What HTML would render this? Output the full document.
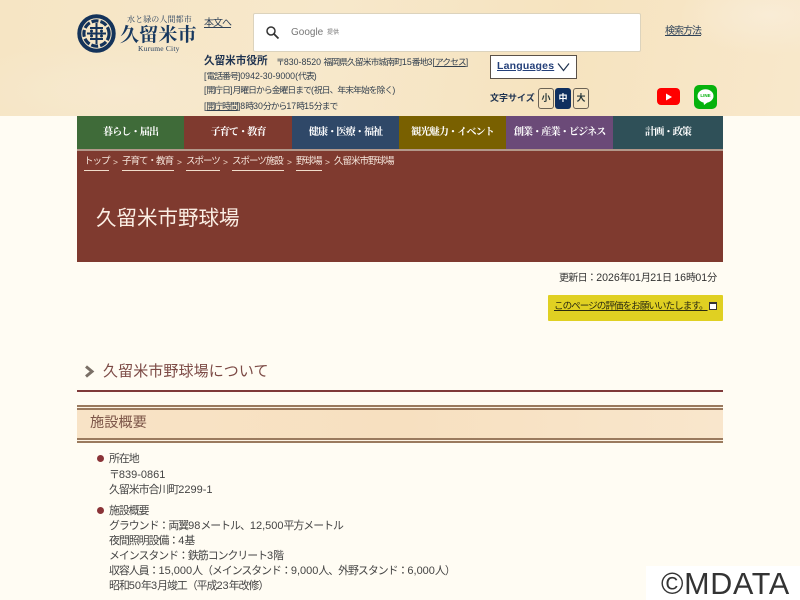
<!DOCTYPE html>
<html lang="ja">
<head>
<meta charset="utf-8">
<title>久留米市野球場</title>
<style>
*{box-sizing:border-box}
html,body{margin:0;padding:0;width:800px;height:600px;overflow:hidden;background:#fffcf3}
body{font-family:"Liberation Sans","Noto Sans CJK JP",sans-serif;color:#333;position:relative}
.a{position:absolute;white-space:nowrap}
i{font-style:normal}
a,.u{text-decoration:underline}
.hd{left:0;top:0;width:800px;height:116px;background:
radial-gradient(ellipse 160px 50px at 120px 90px,#f7e9cf 0,rgba(247,233,207,0) 100%),
radial-gradient(ellipse 90px 40px at 770px 15px,#f9ecd6 0,rgba(249,236,214,0) 100%),
linear-gradient(100deg,#f6e5c4 0%,#f7e8cb 40%,#f6e3bf 70%,#f8e8cb 100%)}
.t{color:#33404f;font-size:8.8px;line-height:12px}
.t i{font-size:8.8px;letter-spacing:-.95px}
.nav{top:116px;height:33px;color:#fff;font-size:10.2px;letter-spacing:-1px;font-weight:bold;font-family:"Liberation Serif","Noto Serif CJK SC","Noto Sans CJK JP",serif;text-align:center;line-height:33px}
.bc{color:#f5e6dc;font-size:9.5px;letter-spacing:-1px;top:152px;line-height:20px;height:19px;border-bottom:1px solid #f0dccb}
.sep{color:#f0dccb;font-size:8.5px;top:152px;line-height:20px}
.li{left:109px;font-size:11px;line-height:15px;color:#444}
.li i{font-size:10.9px;letter-spacing:-1px}
.up i{font-size:10px;letter-spacing:-.7px}
.dot{left:97px;width:7px;height:7px;border-radius:50%;background:#8a3337}
</style>
</head>
<body>
<div class="a hd"></div>

<!-- logo -->
<svg class="a" style="left:77px;top:14px" width="39" height="39" viewBox="0 0 39 39">
<circle cx="19.5" cy="19.5" r="17.2" fill="none" stroke="#14335a" stroke-width="4"/>
<circle cx="19.5" cy="19.5" r="12.6" fill="none" stroke="#14335a" stroke-width="3.2" stroke-dasharray="7 2"/>
<path d="M19.5 9V30M10 19.5H29M13 14H26M13 25H26" stroke="#14335a" stroke-width="2" fill="none"/>
<circle cx="14.5" cy="17" r="1.5" fill="#14335a"/><circle cx="24.5" cy="17" r="1.5" fill="#14335a"/>
<circle cx="14.5" cy="22" r="1.5" fill="#14335a"/><circle cx="24.5" cy="22" r="1.5" fill="#14335a"/>
</svg>
<div class="a" style="left:127px;top:14px;font-size:8px;line-height:12px;color:#1f3a5c;font-family:'Liberation Serif','Noto Serif CJK SC',serif;letter-spacing:.1px">水と緑の人間都市</div>
<div class="a" style="left:120px;top:24px;font-size:19px;line-height:23px;color:#17385f;font-family:'Liberation Serif','Noto Serif CJK SC',serif;font-weight:bold;letter-spacing:.2px">久留米市</div>
<div class="a" style="left:138px;top:44px;font-size:7.5px;line-height:10px;color:#1f3a5c;font-family:'Liberation Serif',serif;letter-spacing:.2px">Kurume City</div>

<div class="a u" style="left:204px;top:17px;font-size:10px;letter-spacing:-1px;line-height:14px;color:#2f4258">本文へ</div>

<!-- search -->
<div class="a" style="left:253px;top:13px;width:388px;height:39px;background:#fff;border:1px solid #dcd3bd;border-radius:2px"></div>
<svg class="a" style="left:265px;top:25px" width="15" height="15" viewBox="0 0 15 15"><circle cx="6" cy="6" r="4" fill="none" stroke="#333" stroke-width="1.5"/><path d="M9 9L13.5 13.5" stroke="#333" stroke-width="1.8"/></svg>
<div class="a" style="left:291px;top:26px;font-size:10px;line-height:13px;color:#777">Google</div>
<div class="a" style="left:327px;top:27px;font-size:6px;line-height:12px;color:#777">提供</div>
<div class="a u" style="left:665px;top:25px;font-size:10px;letter-spacing:-1px;line-height:13px;color:#2f4258">検索方法</div>

<!-- address -->
<div class="a" style="left:204px;top:54px;font-size:10.6px;line-height:15px;font-weight:bold;color:#1f3350">久留米市役所</div>
<div class="a t" style="left:276px;top:56px"><i>〒</i>830-8520 <i>福岡県久留米市城南町</i>15<i>番地</i>3<span class="u">[<i>アクセス</i>]</span></div>
<div class="a t" style="left:204px;top:70px">[<i>電話番号</i>]0942-30-9000(<i>代表</i>)</div>
<div class="a t" style="left:204px;top:84px">[<i>開庁日</i>]<i>月曜日から金曜日まで</i>(<i>祝日、年末年始を除く</i>)</div>
<div class="a t" style="left:204px;top:100px"><span class="u">[<i>開庁時間</i>]</span>8<i>時</i>30<i>分から</i>17<i>時</i>15<i>分まで</i></div>

<!-- languages -->
<div class="a" style="left:490px;top:55px;width:87px;height:24px;background:#fff;border:1px solid #5a5148"></div>
<div class="a u" style="left:497px;top:59px;font-size:10.5px;line-height:14px;font-weight:bold;color:#24407a;letter-spacing:.2px">Languages</div>
<svg class="a" style="left:557px;top:62px" width="13" height="10" viewBox="0 0 13 10"><path d="M1 1.5L6.5 8.5L12 1.5" fill="none" stroke="#1f3350" stroke-width="1.2"/></svg>

<!-- text size -->
<div class="a" style="left:490px;top:92px;font-size:9px;line-height:13px;font-weight:bold;color:#1f3350">文字サイズ</div>
<div class="a" style="left:538px;top:88px;width:16px;height:21px;border:1px solid #6b6355;border-radius:3px;font-size:9px;line-height:19px;text-align:center;font-weight:bold;color:#2a3a3a">小</div>
<div class="a" style="left:555px;top:88px;width:16px;height:21px;background:#0f2f5f;border-radius:3px;font-size:9px;line-height:21px;text-align:center;font-weight:bold;color:#fff">中</div>
<div class="a" style="left:573px;top:88px;width:16px;height:21px;border:1px solid #6b6355;border-radius:3px;font-size:9px;line-height:19px;text-align:center;font-weight:bold;color:#2a3a3a">大</div>

<!-- sns -->
<div class="a" style="left:657px;top:88px;width:23px;height:17px;background:#f00;border-radius:4px"></div>
<svg class="a" style="left:665px;top:92.5px" width="8" height="8" viewBox="0 0 8 8"><path d="M1 0.5L7 4L1 7.5Z" fill="#fff"/></svg>
<div class="a" style="left:694px;top:85px;width:23px;height:24px;background:#06b20d;border-radius:5px"></div>
<svg class="a" style="left:696px;top:88px" width="19" height="18" viewBox="0 0 19 18"><ellipse cx="9.5" cy="8" rx="8" ry="6.7" fill="#fff"/><path d="M7.5 14L8 17L12 14Z" fill="#fff"/></svg>
<div class="a" style="left:699px;top:92px;width:13px;font-size:4.5px;line-height:8px;text-align:center;font-weight:bold;color:#06b20d">LINE</div>

<!-- nav -->
<div class="a nav" style="left:77px;width:107px;background:#3f6b39">暮らし・届出</div>
<div class="a nav" style="left:184px;width:108px;background:#7f3a2f">子育て・教育</div>
<div class="a nav" style="left:292px;width:107px;background:#2f4868">健康・医療・福祉</div>
<div class="a nav" style="left:399px;width:107px;background:#796000">観光魅力・イベント</div>
<div class="a nav" style="left:506px;width:107px;background:#6b4a78">創業・産業・ビジネス</div>
<div class="a nav" style="left:613px;width:110px;background:#2f5058">計画・政策</div>

<!-- title band -->
<div class="a" style="left:77px;top:149px;width:646px;height:113px;background:#7f3a2f;border-top:2px solid #b3988a"></div>
<div class="a bc" style="left:84px;width:25px">トップ</div><div class="a sep" style="left:113px">&gt;</div>
<div class="a bc" style="left:122px;width:52px">子育て・教育</div><div class="a sep" style="left:177px">&gt;</div>
<div class="a bc" style="left:186px;width:34px">スポーツ</div><div class="a sep" style="left:223px">&gt;</div>
<div class="a bc" style="left:232px;width:52px">スポーツ施設</div><div class="a sep" style="left:287px">&gt;</div>
<div class="a bc" style="left:296px;width:26px">野球場</div><div class="a sep" style="left:325px">&gt;</div>
<div class="a" style="left:334px;top:152px;font-size:9.5px;letter-spacing:-1px;line-height:20px;color:#f5e6dc">久留米市野球場</div>
<div class="a" style="left:96px;top:205px;font-size:20.5px;line-height:28px;color:#fbeee4">久留米市野球場</div>

<!-- update -->
<div class="a up" style="left:559px;top:271px;font-size:10.6px;line-height:14px;color:#333"><i>更新日：</i>2026<i>年</i>01<i>月</i>21<i>日</i> 16<i>時</i>01<i>分</i></div>
<div class="a" style="left:548px;top:295px;width:175px;height:26px;background:#e0d022;border-radius:1px"></div>
<div class="a u" style="left:554px;top:300px;font-size:9.6px;letter-spacing:-1px;line-height:14px;color:#2a2a10">このページの評価をお願いいたします。</div>
<div class="a" style="left:709px;top:302px;width:8px;height:8px;border:1px solid #333;border-top-width:2px;background:#fff"></div>

<!-- heading 2 -->
<svg class="a" style="left:84px;top:365px" width="11" height="13" viewBox="0 0 11 13"><path d="M2 1.5L8 6.5L2 11.5" fill="none" stroke="#7a6f66" stroke-width="3"/></svg>
<div class="a" style="left:103px;top:361px;font-size:15px;line-height:22px;color:#7c4a45;letter-spacing:.1px">久留米市野球場について</div>
<div class="a" style="left:77px;top:390px;width:646px;height:2px;background:#7f3a3a"></div>

<!-- heading 3 -->
<div class="a" style="left:77px;top:405px;width:646px;height:38px;background:linear-gradient(90deg,#f8e3c6,#f7e0c0 50%,#f9e6cc)"></div>
<div class="a" style="left:77px;top:405px;width:646px;height:2px;background:#9a7a5e"></div>
<div class="a" style="left:77px;top:407px;width:646px;height:1px;background:#fdf3e4"></div>
<div class="a" style="left:77px;top:408px;width:646px;height:2px;background:#9a7a5e"></div>
<div class="a" style="left:77px;top:438px;width:646px;height:2px;background:#9a7a5e"></div>
<div class="a" style="left:77px;top:440px;width:646px;height:1px;background:#fdf3e4"></div>
<div class="a" style="left:77px;top:441px;width:646px;height:2px;background:#9a7a5e"></div>
<div class="a" style="left:90px;top:413px;font-size:14.2px;line-height:20px;color:#7c5548">施設概要</div>

<!-- list -->
<div class="a dot" style="top:455px"></div>
<div class="a li" style="top:452px"><i>所在地</i></div>
<div class="a li" style="top:468px"><i>〒</i>839-0861</div>
<div class="a li" style="top:483px"><i>久留米市合川町</i>2299-1</div>
<div class="a dot" style="top:507px"></div>
<div class="a li" style="top:504px"><i>施設概要</i></div>
<div class="a li" style="top:519px"><i>グラウンド：両翼</i>98<i>メートル、</i>12,500<i>平方メートル</i></div>
<div class="a li" style="top:534px"><i>夜間照明設備：</i>4<i>基</i></div>
<div class="a li" style="top:549px"><i>メインスタンド：鉄筋コンクリート</i>3<i>階</i></div>
<div class="a li" style="top:564px"><i>収容人員：</i>15,000<i>人（メインスタンド：</i>9,000<i>人、外野スタンド：</i>6,000<i>人）</i></div>
<div class="a li" style="top:579px"><i>昭和</i>50<i>年</i>3<i>月竣工（平成</i>23<i>年改修）</i></div>

<!-- watermark -->
<div class="a" style="left:646px;top:566px;width:154px;height:34px;background:#fff"></div>
<div class="a" style="left:661px;top:567px;font-size:30.5px;letter-spacing:.7px;line-height:34px;color:#333">©MDATA</div>
</body>
</html>
